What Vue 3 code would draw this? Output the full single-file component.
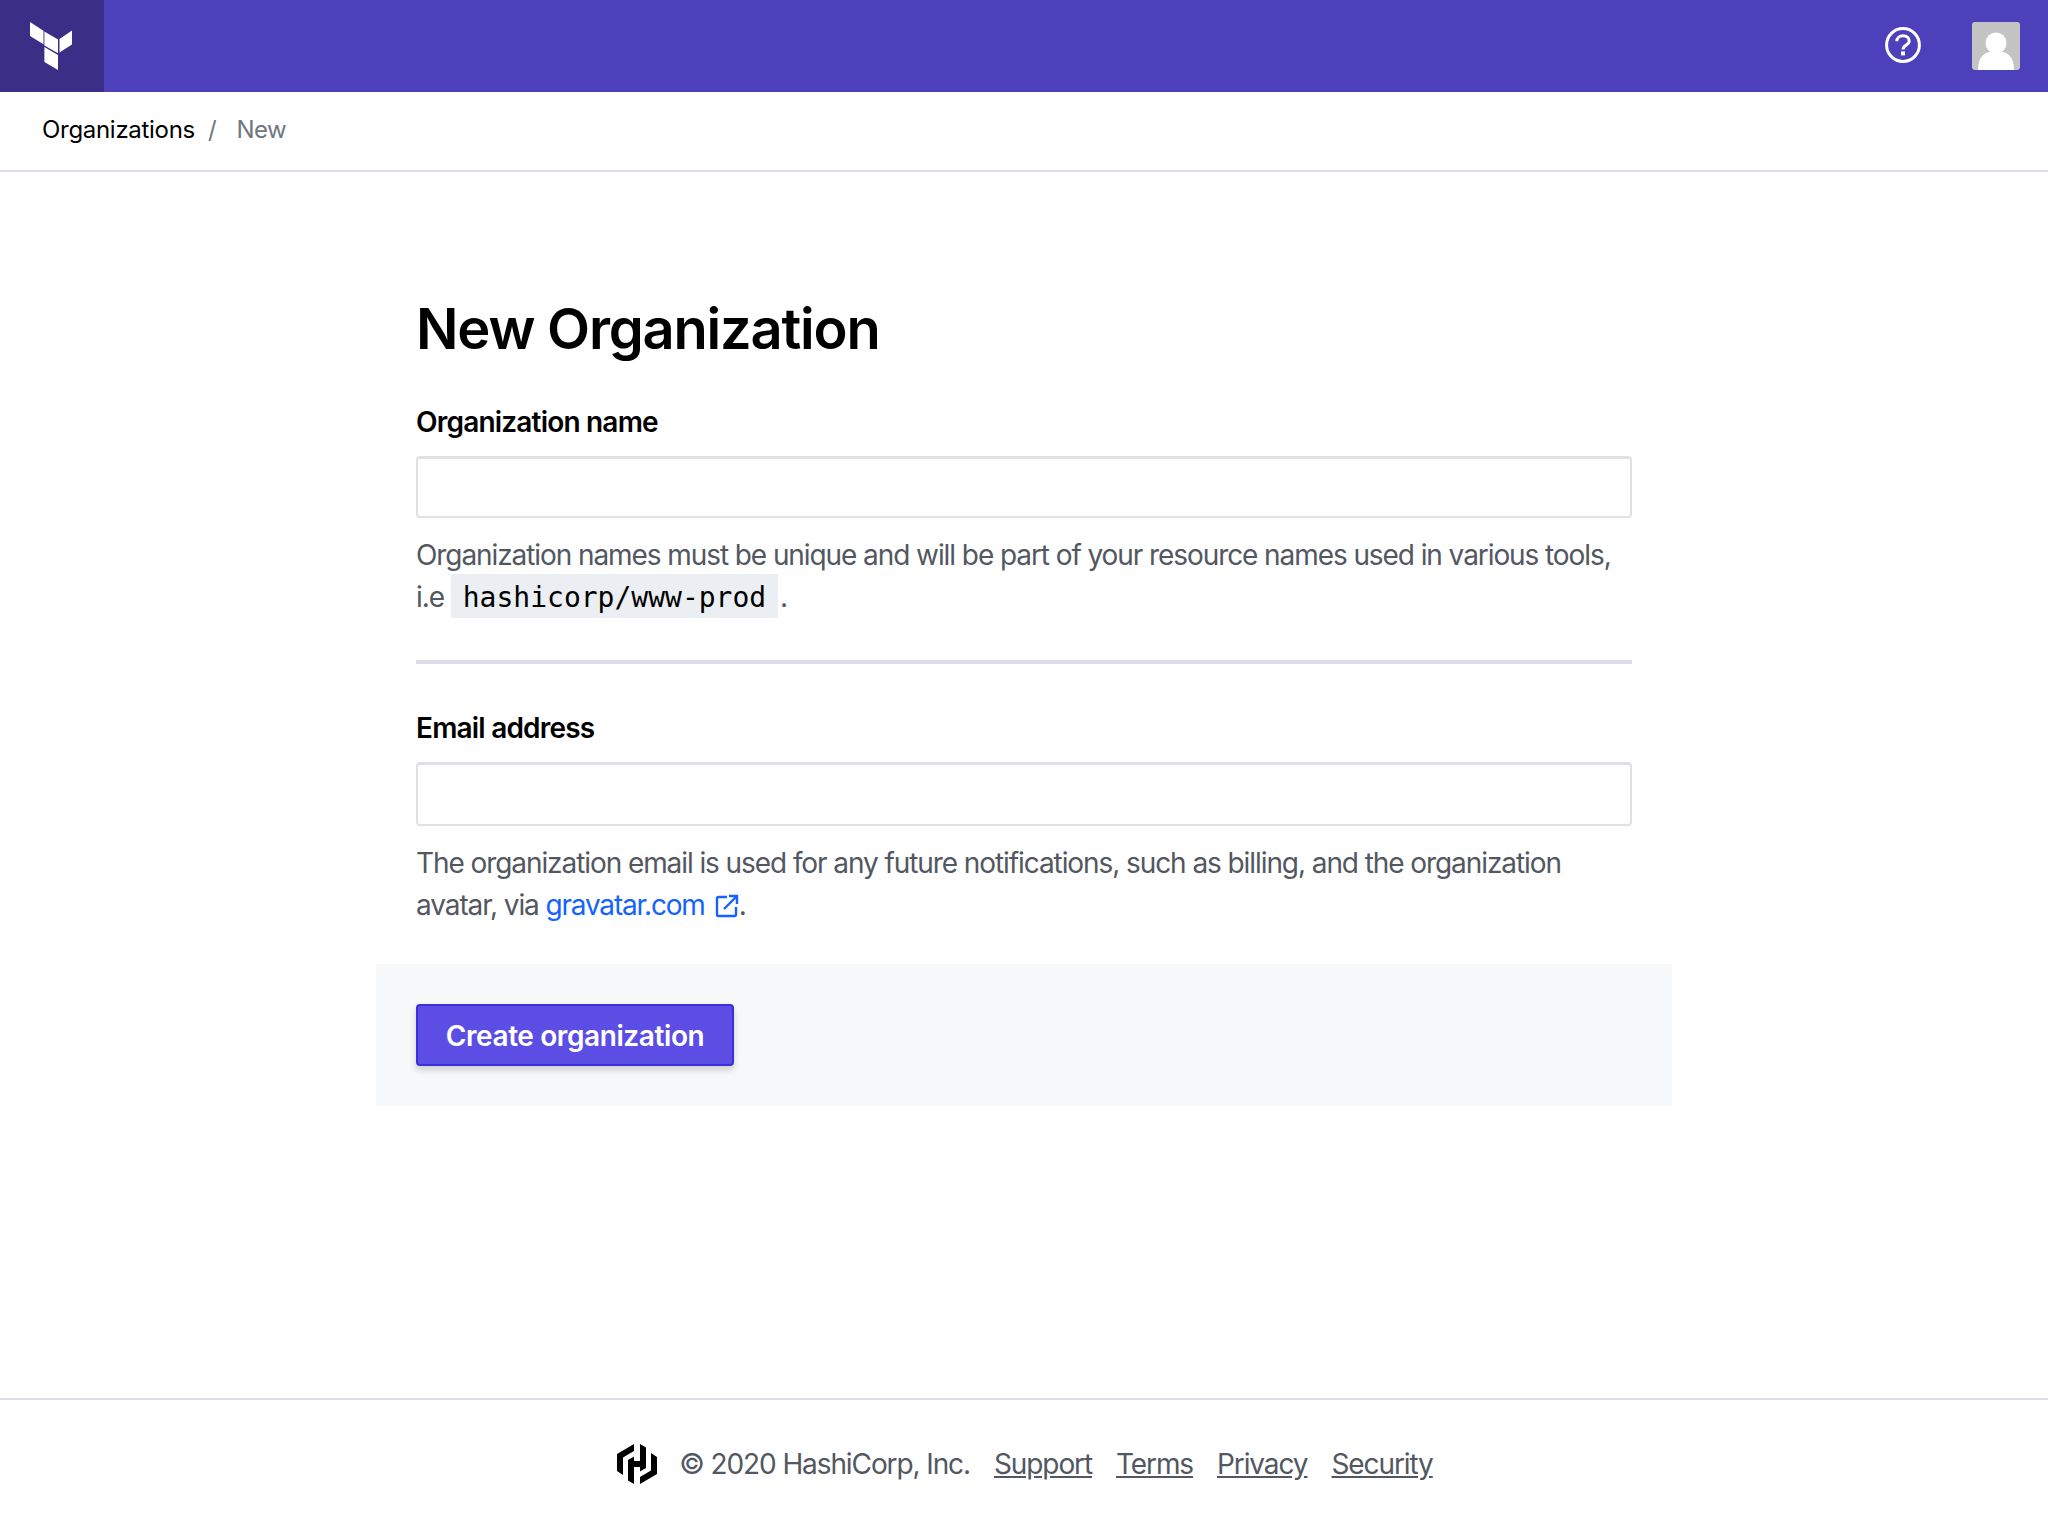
<script setup>
const footerLinks = ['Support', 'Terms', 'Privacy', 'Security']
</script>

<template>
  <div class="page">
    <header class="topbar">
      <a class="brand">
        <svg width="43" height="48" viewBox="0 0 43 48" class="logo">
          <path fill="#fff" d="M0 0 13.500 8.800V22.300L0 14ZM14.400 9.500 28 17.500V31.300L14.400 23.500ZM42 8.500V22.500L29.500 30.500V17ZM14.400 25 28 33V48L14.400 40Z" />
        </svg>
      </a>
      <div class="top-actions">
        <svg class="help" width="36" height="36" viewBox="0 0 36 36">
          <circle cx="18" cy="18" r="16.400" fill="none" stroke="#fff" stroke-width="3" />
          <path d="M11.800 14.300c0-3.400 2.700-5.500 6.200-5.500s6.200 2.100 6.200 5.100c0 4.200-6.200 4-6.200 8.600" fill="none" stroke="#fff" stroke-width="3" />
          <rect x="16" y="24.400" width="4" height="4" fill="#fff" />
        </svg>
        <div class="avatar">
          <svg width="48" height="48" viewBox="0 0 48 48">
            <circle cx="24" cy="21" r="10.500" fill="#fff" />
            <path d="M6 48c0-13 6-19 18-19s18 6 18 19Z" fill="#fff" />
          </svg>
        </div>
      </div>
    </header>

    <nav class="crumbs">
      <a class="crumb-link">Organizations</a>
      <span class="sep">/</span>
      <span class="crumb-current">New</span>
    </nav>

    <main class="main">
      <div class="form-wrap">
        <h1>New Organization</h1>
        <section class="field">
          <label>Organization name</label>
          <input type="text" />
          <p class="help-text">
            Organization names must be unique and will be part of your resource names used in various tools,
            <br />i.e <code>hashicorp/www-prod</code> .
          </p>
        </section>
        <hr />
        <section class="field">
          <label>Email address</label>
          <input type="text" class="tall" />
          <p class="help-text">
            The organization email is used for any future notifications, such as billing, and the organization
            <br />avatar, via <a class="ext">gravatar.com<svg width="24" height="24" viewBox="0 0 24 24">
              <path d="M12 3H3.500A1.500 1.500 0 0 0 2 4.500v16A1.500 1.500 0 0 0 3.500 22h16a1.500 1.500 0 0 0 1.500-1.500V13M9 15 21.500 2.500M14 2h8v8" fill="none" stroke="#1563ff" stroke-width="2.400" />
            </svg></a>.
          </p>
        </section>
        <div class="actions">
          <button type="button">Create organization</button>
        </div>
      </div>
    </main>

    <footer class="footer">
      <svg width="40" height="40" viewBox="0 0 40 40" class="hc">
        <path fill="#000" d="M17 0V7L6 13.500V31L0 27V10ZM23 40V33L34 26.500V9L40 13V30ZM11 16 17 12.500V17H23V0L29 3.500V24L23 27.500V23H17V40L11 36.500Z" />
      </svg>
      <span class="copy">© 2020 HashiCorp, Inc.</span>
      <a v-for="l in footerLinks" :key="l" class="foot-link">{{ l }}</a>
    </footer>
  </div>
</template>

<style>
html, body { margin: 0; background: #fff; }
</style>

<style scoped>
* { box-sizing: border-box; }
.page {
  min-height: 1536px;
  display: flex;
  flex-direction: column;
  font-family: Inter, "Liberation Sans", sans-serif;
  color: #000;
}
.topbar {
  height: 92px;
  background: #4c40bb;
  display: flex;
  align-items: center;
  justify-content: space-between;
}
.brand {
  width: 104px;
  height: 92px;
  background: #3a2e87;
  display: flex;
  align-items: center;
  justify-content: center;
  padding-right: 2px;
}
.logo { display: block; }
.top-actions {
  display: flex;
  align-items: center;
  gap: 51px;
  padding-right: 28px;
}
.help { display: block; margin-top: -3px; }
.avatar {
  width: 48px;
  height: 48px;
  background: #c4c4c4;
  border-radius: 3px;
  overflow: hidden;
}
.avatar svg { display: block; }
.crumbs {
  height: 80px;
  border-bottom: 2px solid #dcdce6;
  display: flex;
  align-items: center;
  padding: 0 42px 3px;
  font-size: 24px;
}
.crumb-link { color: #000; letter-spacing: -0.3px; }
.sep { color: #6f7682; margin: 0 20px 0 13px; }
.crumb-current { color: #6f7682; letter-spacing: -0.6px; }
.main {
  flex: 1;
  display: flex;
  justify-content: center;
  padding-top: 122px;
}
.form-wrap { width: 1296px; }
h1 {
  margin: 0 40px 40px;
  font-size: 56px;
  line-height: 70px;
  font-weight: 600;
  letter-spacing: -1.2px;
}
.field { padding: 0 40px; }
label {
  display: block;
  font-size: 28px;
  line-height: 36px;
  font-weight: 600;
  letter-spacing: -0.8px;
  margin-bottom: 16px;
}
input {
  display: block;
  width: 100%;
  height: 62px;
  border: 2px solid #dfe1e7;
  border-top-width: 3px;
  border-radius: 4px;
  background: #fff;
  outline: none;
}
input.tall { height: 64px; }
.help-text {
  margin: 16px 0 0;
  font-size: 28px;
  line-height: 42px;
  color: #525761;
  letter-spacing: -1.08px;
}
code {
  display: inline-block;
  background: #ebeef2;
  color: #000;
  font-family: "DejaVu Sans Mono", monospace;
  font-size: 28px;
  line-height: 40px;
  letter-spacing: 0;
  padding: 4px 12px 0;
  margin-top: -6px;
  margin-right: -5px;
}
.ext { color: #1563ff; letter-spacing: -1.2px; }
.ext svg { margin-left: 10px; vertical-align: -3px; }
hr {
  border: 0;
  height: 4px;
  background: #dcdce6;
  margin: 42px 40px 46px;
}
.actions {
  margin-top: 38px;
  background: #f7f8fa;
  padding: 40px;
  height: 142px;
}
button {
  height: 62px;
  width: 318px;
  border: 2px solid #3b2fd9;
  border-radius: 4px;
  background: #5c4ee5;
  color: #fff;
  font-family: inherit;
  font-size: 28px;
  font-weight: 600;
  letter-spacing: -0.4px;
  padding: 2px 0 0;
  box-shadow: 0 4px 6px rgba(37, 38, 45, 0.2);
}
.footer {
  height: 138px;
  border-top: 2px solid #dcdce6;
  padding-bottom: 8px;
  display: flex;
  align-items: center;
  justify-content: center;
  font-size: 28px;
  color: #525761;
  letter-spacing: -1.1px;
}
.hc { margin: 0 22px 0 2px; }
.copy { margin-right: 24px; }
.foot-link { text-decoration: underline; margin-right: 24px; }
.foot-link:last-child { margin-right: 0; }
</style>
